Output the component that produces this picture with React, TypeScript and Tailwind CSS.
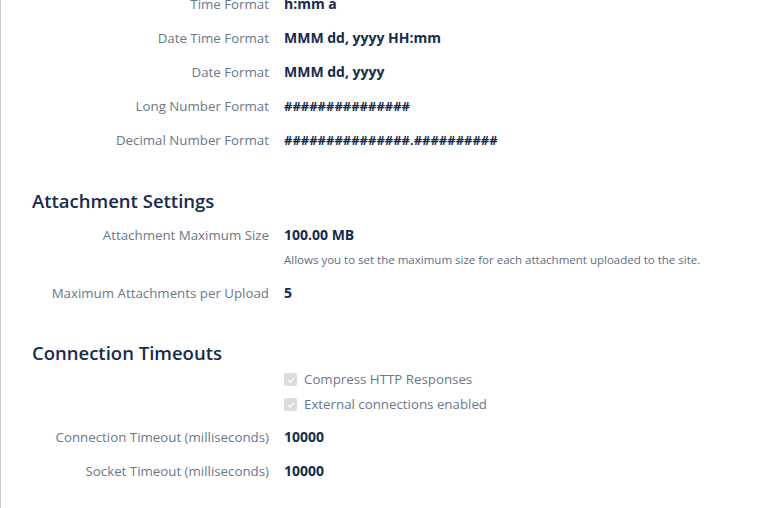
import React from "react"

const font = { fontFamily: '"Open Sans", "Noto Sans", "Liberation Sans", sans-serif' }

const formatRows = [
  { label: "Time Format", value: "h:mm a", mono: false },
  { label: "Date Time Format", value: "MMM dd, yyyy HH:mm", mono: false },
  { label: "Date Format", value: "MMM dd, yyyy", mono: false },
  { label: "Long Number Format", value: "###############", mono: true },
  { label: "Decimal Number Format", value: "###############.##########", mono: true },
]

function Row({ label, children }: { label: string; children: React.ReactNode }) {
  return (
    <div className="grid grid-cols-[268px_1fr] gap-x-[15px] py-[7px]">
      <div className="text-right text-[13.3px] leading-5 text-[#6b778c]">{label}</div>
      <div className="text-[14px] leading-5 font-bold text-[#172b4d]">{children}</div>
    </div>
  )
}

function CheckRow({ label }: { label: string }) {
  return (
    <div className="grid grid-cols-[268px_1fr] gap-x-[15px] h-[25px] items-center">
      <div />
      <label className="flex items-center gap-[7px] text-[13.3px] text-[#6b778c]">
        <span className="flex h-[13px] w-[13px] items-center justify-center rounded-[2px] bg-[#dcdcdc]">
          <svg viewBox="0 0 12 12" className="h-[10px] w-[10px]">
            <path d="M2.5 6.2 L5 8.6 L9.6 3.4" fill="none" stroke="#fff" strokeWidth="1.6" />
          </svg>
        </span>
        {label}
      </label>
    </div>
  )
}

function Heading({ children }: { children: React.ReactNode }) {
  return (
    <h2 className="pl-[31px] text-[18.5px] leading-7 font-semibold text-[#172b4d]">{children}</h2>
  )
}

export default function App() {
  return (
    <div className="h-[508px] w-[775px] overflow-hidden bg-white" style={font}>
      <div className="flex h-full flex-col border-l border-[#cccccc]">
        <div className="-mt-[13px]">
          {formatRows.map((r) => (
            <Row key={r.label} label={r.label}>
              <span className={r.mono ? "text-[13px]" : ""}>{r.value}</span>
            </Row>
          ))}
        </div>

        <div className="mt-[30px]">
          <Heading>Attachment Settings</Heading>
          <div className="mt-[3px] grid grid-cols-[268px_1fr] gap-x-[15px] pt-[7px] pb-[8px]">
            <div className="text-right text-[13.3px] leading-5 text-[#6b778c]">Attachment Maximum Size</div>
            <div>
              <div className="text-[14px] leading-5 font-bold text-[#172b4d]">100.00 MB</div>
              <div className="mt-[7px] text-[11.5px] leading-4 text-[#5e6c84]">
                Allows you to set the maximum size for each attachment uploaded to the site.
              </div>
            </div>
          </div>
          <Row label="Maximum Attachments per Upload">5</Row>
        </div>

        <div className="mt-[29px]">
          <Heading>Connection Timeouts</Heading>
          <CheckRow label="Compress HTTP Responses" />
          <CheckRow label="External connections enabled" />
          <div className="mt-[3px]">
            <Row label="Connection Timeout (milliseconds)">10000</Row>
            <Row label="Socket Timeout (milliseconds)">10000</Row>
          </div>
        </div>
      </div>
    </div>
  )
}
